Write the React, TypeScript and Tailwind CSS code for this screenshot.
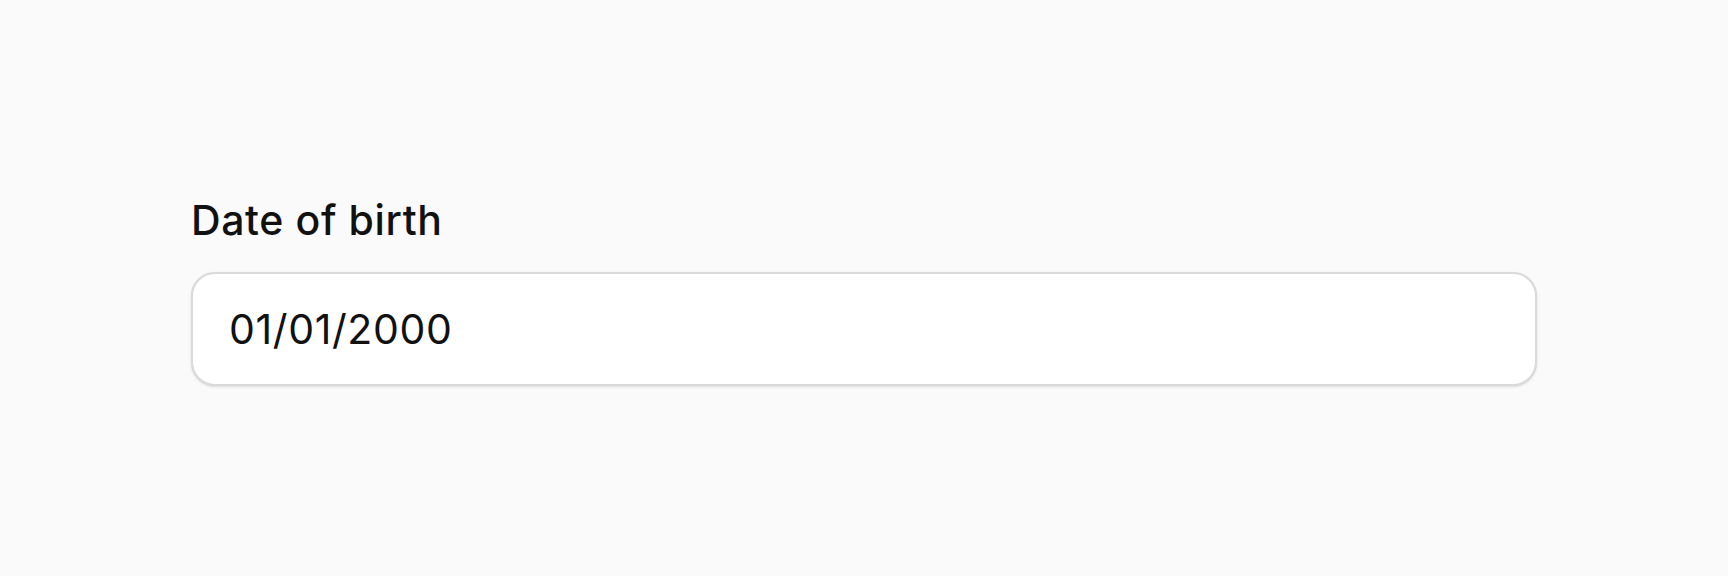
export default function App() {
  return (
    <div className="min-h-screen bg-[#fafafa] flex items-center justify-center font-['Inter',sans-serif]">
      <div className="w-[1346px] flex flex-col">
        <label htmlFor="dob" className="text-[41px] leading-[60px] font-medium tracking-[0.015em] text-[#111] mb-[22px]">
          Date of birth
        </label>
        <input
          id="dob"
          type="text"
          defaultValue="01/01/2000"
          className="w-full rounded-3xl border-2 border-[#d9d9d9] bg-white px-9 py-6 text-[41px] leading-[62px] tracking-[0.015em] text-[#111] shadow-sm outline-none"
        />
      </div>
    </div>
  );
}
